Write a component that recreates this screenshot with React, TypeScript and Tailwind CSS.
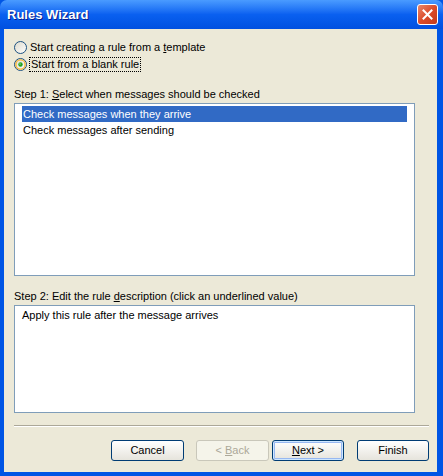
import { useState } from 'react';

const font = { fontFamily: '"Liberation Sans", Arial, sans-serif' };

const Radio = ({ checked }: { checked: boolean }) => (
  <svg width="13" height="13" viewBox="0 0 13 13" className="shrink-0">
    <defs>
      <linearGradient id={checked ? 'rg1' : 'rg0'} x1="0" y1="0" x2="1" y2="1">
        <stop offset="0" stopColor="#DCD9CB" />
        <stop offset="1" stopColor="#FFFFFF" />
      </linearGradient>
    </defs>
    <circle cx="6.5" cy="6.5" r="6" fill={`url(#${checked ? 'rg1' : 'rg0'})`} stroke="#1C5180" />
    {checked && (
      <>
        <circle cx="6.5" cy="6.5" r="4.6" fill="none" stroke="#F8B636" strokeWidth="1.4" />
        <circle cx="6.5" cy="6.5" r="2.2" fill="#21A121" />
        <circle cx="6" cy="6" r="0.8" fill="#8BE08B" />
      </>
    )}
  </svg>
);

const Button = ({
  children,
  disabled,
  isDefault,
  className = '',
}: {
  children: React.ReactNode;
  disabled?: boolean;
  isDefault?: boolean;
  className?: string;
}) => (
  <button
    className={`h-[21px] rounded-[3px] border text-[11px] leading-none ${
      disabled
        ? 'border-[#C9C7BA] bg-[#F5F4EA] text-[#ACA899]'
        : 'border-[#003C74] bg-gradient-to-b from-white to-[#E6E4DC] text-black'
    } ${isDefault ? 'shadow-[inset_0_0_0_1px_#CEE7FF,inset_0_0_0_2px_#98B8F1]' : ''} ${className}`}
    style={font}
  >
    {children}
  </button>
);

export default function App() {
  const [selected, setSelected] = useState(0);
  const rules = ['Check messages when they arrive', 'Check messages after sending'];

  return (
    <div className="w-[443px] h-[476px] flex flex-col bg-[#0055E5] overflow-hidden" style={font}>
      {/* title bar */}
      <div className="h-[29px] shrink-0 flex items-center justify-between pl-[7px] pr-[5px] rounded-t-[7px] bg-gradient-to-b from-[#4A9BFF] via-[#0A60F0] to-[#0050E0]">
        <span className="text-white font-bold text-[13px] [text-shadow:1px_1px_0_#0A1E8C]">
          Rules Wizard
        </span>
        <div className="w-[21px] h-[21px] rounded-[3px] border border-white bg-gradient-to-br from-[#E9866A] via-[#DB4B2A] to-[#C13A1C] flex items-center justify-center">
          <svg width="11" height="11" viewBox="0 0 11 11">
            <path d="M1.5 1.5 L9.5 9.5 M9.5 1.5 L1.5 9.5" stroke="white" strokeWidth="2" strokeLinecap="square" />
          </svg>
        </div>
      </div>

      {/* body */}
      <div className="flex-1 ml-[4px] mr-[6px] mb-[4px] bg-[#ECE9D8] flex flex-col pl-[10px] pr-[9px] text-[11px] text-black">
        <div className="mt-[10px] h-[17px] flex items-center gap-[3px]">
          <Radio checked={false} />
          <span>
            Start creating a rule from a <span className="underline">t</span>emplate
          </span>
        </div>
        <div className="h-[17px] flex items-center gap-[2px]">
          <Radio checked />
          <span className="border border-dotted border-black px-[1px] leading-[13px]">
            Start from a blank rule
          </span>
        </div>

        <div className="mt-[15px] h-[13px] leading-[13px]">
          Step 1: <span className="underline">S</span>elect when messages should be checked
        </div>
        <div className="mt-[2px] w-[401px] h-[173px] border border-[#7F9DB9] bg-white px-[7px] pt-[2px]">
          {rules.map((r, i) => (
            <div
              key={r}
              onClick={() => setSelected(i)}
              className={`h-[16px] leading-[16px] pl-px ${
                selected === i ? 'bg-[#316AC5] text-white' : ''
              }`}
            >
              {r}
            </div>
          ))}
        </div>

        <div className="mt-[14px] h-[13px] leading-[13px]">
          Step 2: Edit the rule <span className="underline">d</span>escription (click an underlined value)
        </div>
        <div className="mt-[2px] w-[401px] h-[108px] border border-[#7F9DB9] bg-white px-[7px] pt-[1px] leading-[16px]">
          Apply this rule after the message arrives
        </div>

        <div className="mt-[12px] w-[415px] border-t border-[#ACA899] border-b border-b-white" />

        <div className="mt-[13px] w-[415px] flex justify-end">
          <Button className="w-[73px]">Cancel</Button>
          <Button className="w-[73px] ml-[12px]" disabled>
            &lt; <span className="underline">B</span>ack
          </Button>
          <Button className="w-[72px] ml-[3px]" isDefault>
            <span className="underline">N</span>ext &gt;
          </Button>
          <Button className="w-[72px] ml-[13px]">Finish</Button>
        </div>
      </div>
    </div>
  );
}
